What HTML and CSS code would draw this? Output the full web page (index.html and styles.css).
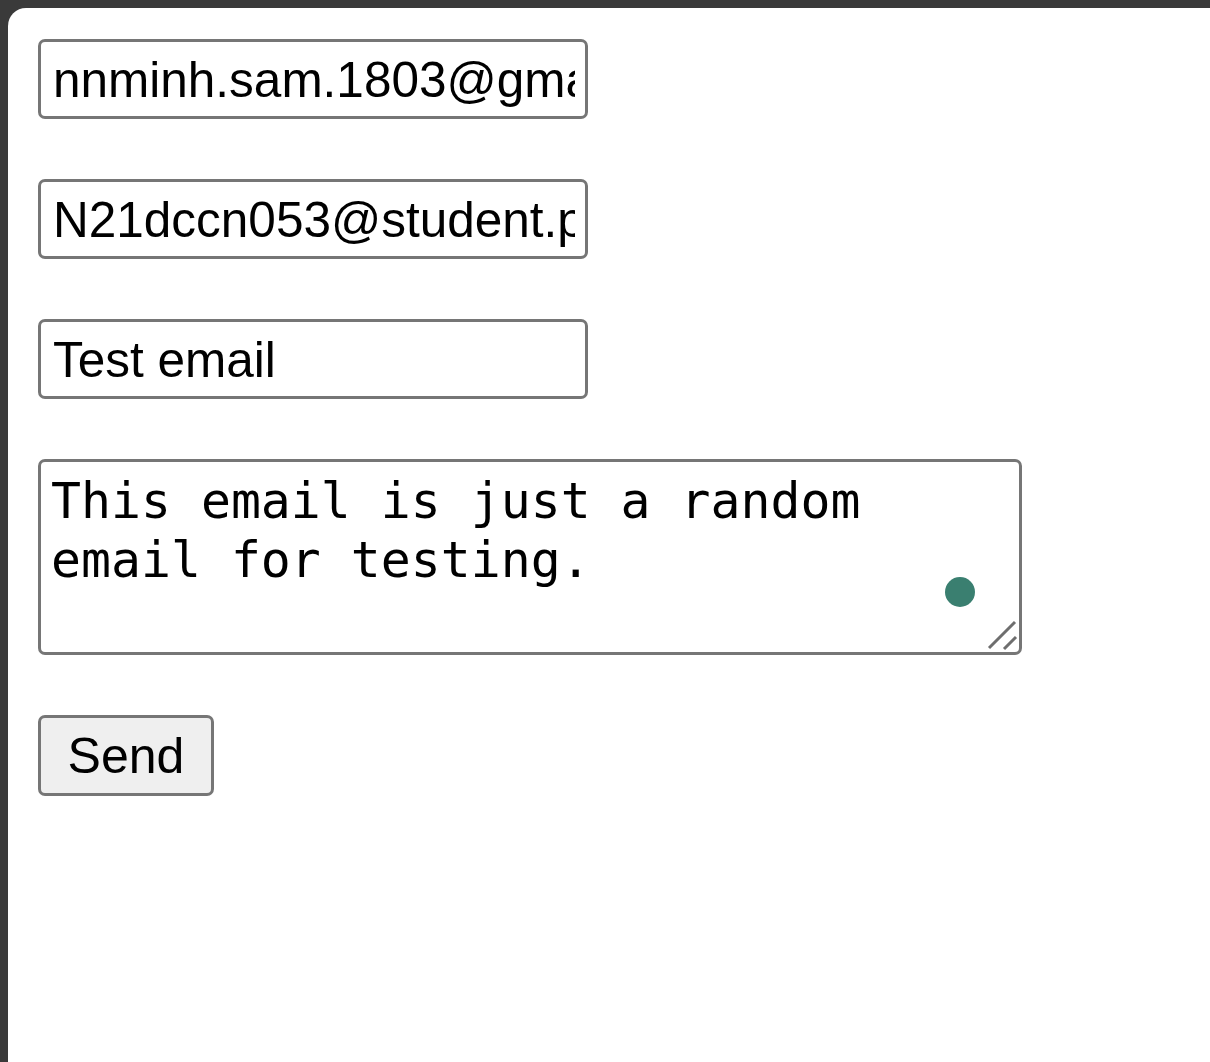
FILE: index.html
```html
<!DOCTYPE html>
<html lang="en">
<head>
<meta charset="utf-8">
<title>Send email</title>
<link rel="stylesheet" href="styles.css">
</head>
<body>
<div class="window">
  <form class="mail-form" onsubmit="return false;">
    <input class="field" type="text" value="nnminh.sam.1803@gmail.com">
    <input class="field" type="text" value="N21dccn053@student.ptithcm.edu.vn">
    <input class="field" type="text" value="Test email">
    <div class="area-wrap">
      <textarea class="message">This email is just a random email for testing.</textarea>
      <span class="dot"></span>
      <svg class="grip" width="32" height="32" viewBox="0 0 32 32" aria-hidden="true">
        <line x1="3" y1="29" x2="29" y2="3" stroke="#6e6e6e" stroke-width="3"/>
        <line x1="18" y1="30" x2="30" y2="18" stroke="#6e6e6e" stroke-width="3"/>
      </svg>
    </div>
    <div class="actions">
      <button class="send" type="submit">Send</button>
    </div>
  </form>
</div>
</body>
</html>
```

FILE: styles.css
```css
html, body {
  margin: 0;
  padding: 0;
  height: 100%;
}
body {
  background: #3a3a3a;
  font-family: "Liberation Sans", Arial, sans-serif;
  overflow: hidden;
}
.window {
  box-sizing: border-box;
  margin: 8px 0 0 8px;
  height: calc(100% - 8px);
  background: #ffffff;
  border-top-left-radius: 18px;
  padding: 31px 0 0 30px;
}
.mail-form {
  display: flex;
  flex-direction: column;
  align-items: flex-start;
  gap: 60px;
}
.field {
  box-sizing: border-box;
  width: 550px;
  height: 80px;
  margin: 0;
  padding: 0 10px 0 12px;
  border: 3px solid #767676;
  border-radius: 7px;
  background: #ffffff;
  color: #000000;
  font-family: "Liberation Sans", Arial, sans-serif;
  font-size: 49.5px;
  outline: none;
}
.area-wrap {
  position: relative;
  width: 984px;
  height: 196px;
}
.message {
  box-sizing: border-box;
  display: block;
  width: 984px;
  height: 196px;
  margin: 0;
  padding: 10px 10px 0 10px;
  border: 3px solid #767676;
  border-radius: 7px;
  background: #ffffff;
  color: #000000;
  font-family: "DejaVu Sans Mono", "Liberation Mono", monospace;
  font-size: 49.8px;
  line-height: 59px;
  resize: none;
  overflow: hidden;
  outline: none;
}
.dot {
  position: absolute;
  left: 907px;
  top: 118px;
  width: 30px;
  height: 30px;
  border-radius: 50%;
  background: #3a7f70;
}
.grip {
  position: absolute;
  left: 948px;
  top: 160px;
}
.actions {
  display: flex;
}
.send {
  box-sizing: border-box;
  width: 176px;
  height: 81px;
  margin: 0;
  padding: 0;
  border: 3px solid #767676;
  border-radius: 7px;
  background: #efefef;
  color: #000000;
  font-family: "Liberation Sans", Arial, sans-serif;
  font-size: 50px;
}
```
